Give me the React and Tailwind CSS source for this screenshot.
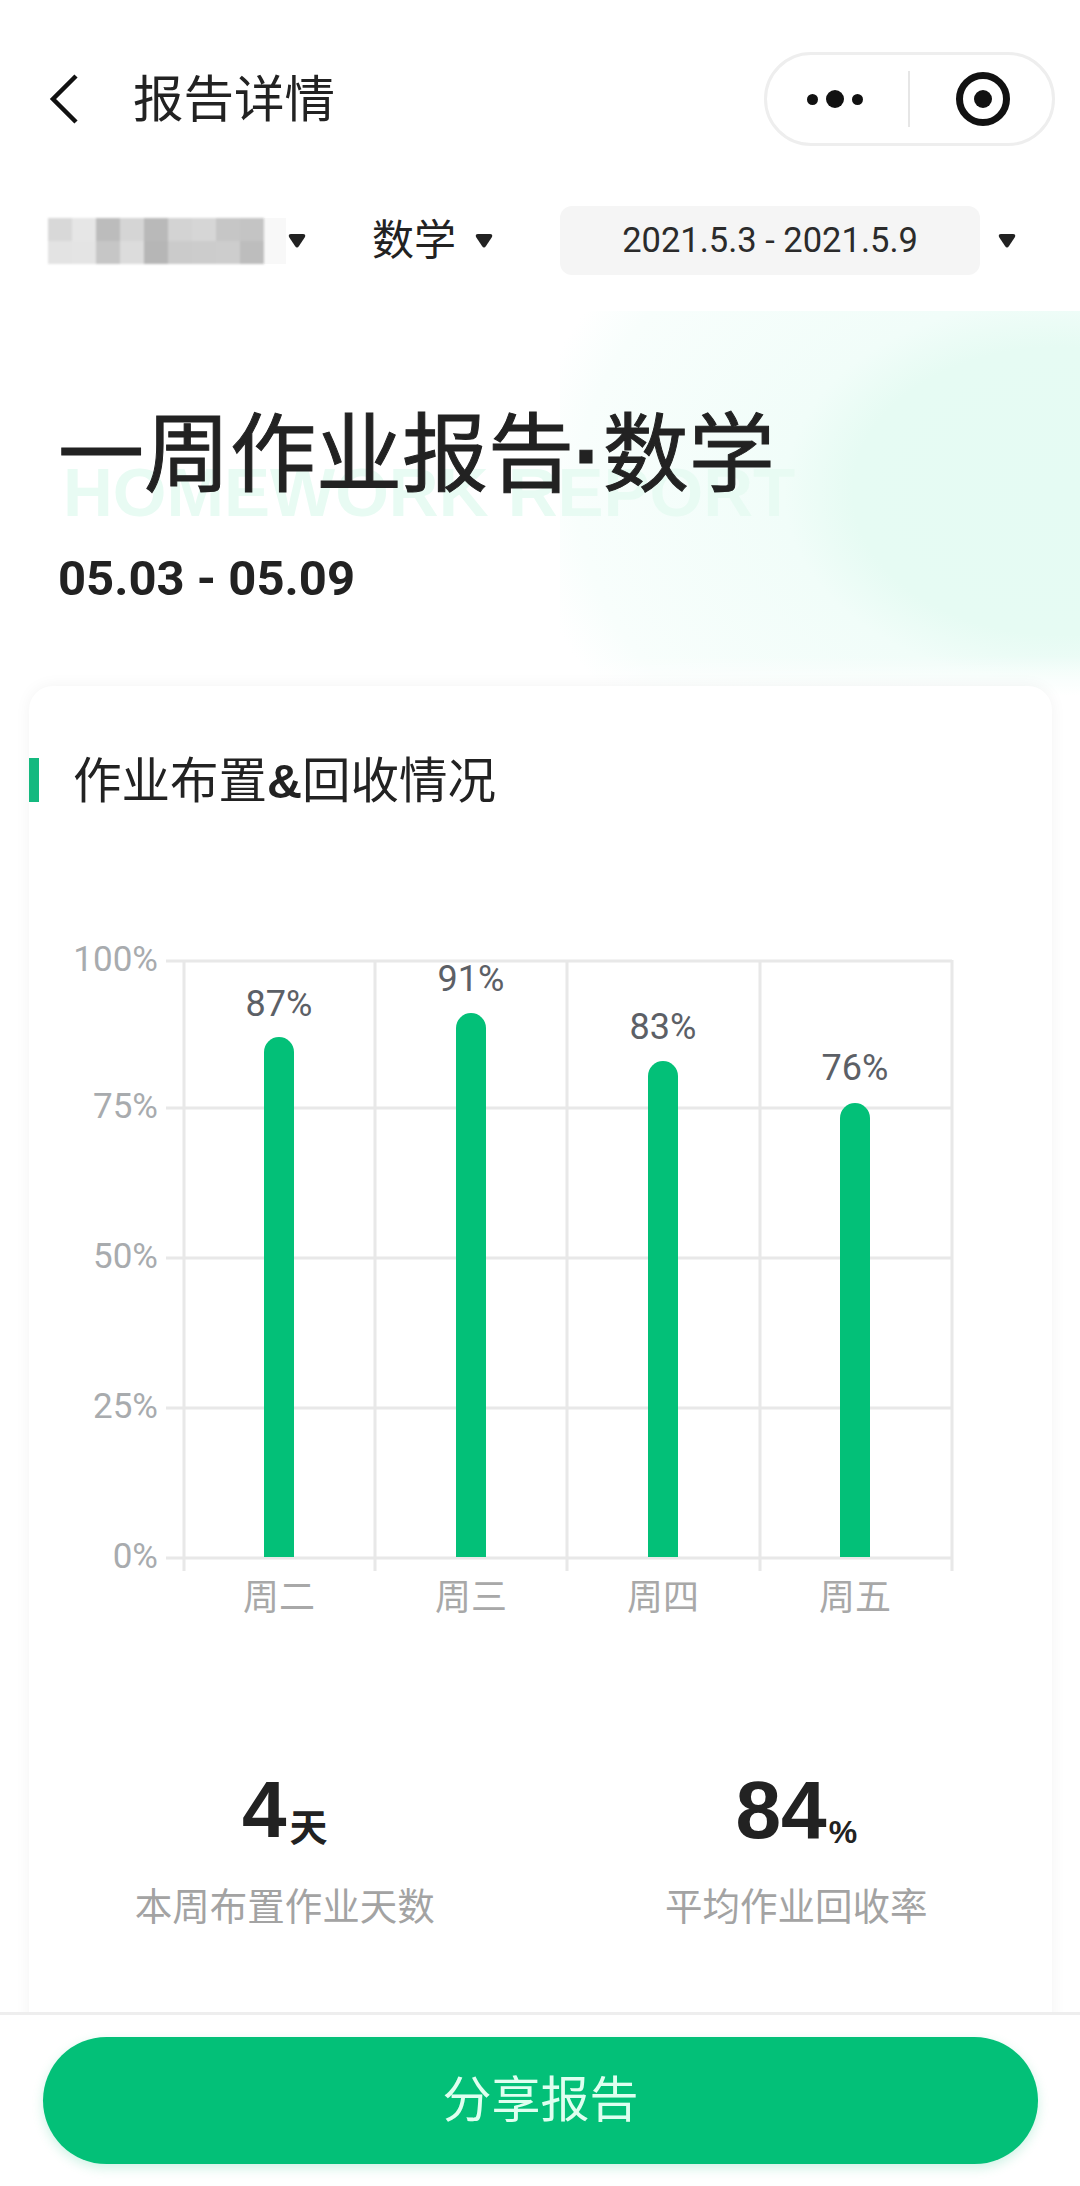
import React from "react";

const CJK = '"Liberation Sans", "Noto Sans CJK SC", sans-serif';
const CHART_FONT = 'Roboto, "Noto Sans CJK SC", sans-serif';

const bars = [
  { day: "周二", value: 87, top: 1037, labelY: 1016 },
  { day: "周三", value: 91, top: 1013, labelY: 991 },
  { day: "周四", value: 83, top: 1061, labelY: 1039 },
  { day: "周五", value: 76, top: 1103, labelY: 1080 },
];

const yTicks = [
  { label: "100%", y: 961 },
  { label: "75%", y: 1108 },
  { label: "50%", y: 1258 },
  { label: "25%", y: 1408 },
  { label: "0%", y: 1558 },
];

// blurred name, two rows of grey blocks
const mosaic = [
  "#d8d8d8", "#e6e6e6", "#bcbcbc", "#d5d5d5", "#b9b9b9", "#d3d3d3", "#d6d6d6", "#c6c6c6", "#c4c4c4",
  "#e3e3e3", "#e4e4e4", "#c6c6c6", "#dcdcdc", "#b6b6b6", "#cbcbcb", "#cccccc", "#cdcdcd", "#bdbdbd",
];

const Caret = ({ className = "" }) => (
  <svg width="18" height="16" viewBox="0 0 18 16" className={className}>
    <path d="M1 4 Q0 1 3 1 H15 Q18 1 17 4 L11 13 Q9 16 7 13 Z" fill="#222" />
  </svg>
);

const Chart = () => (
  <svg width="1023" height="700" viewBox="29 930 1023 700" className="block" style={{ fontFamily: CHART_FONT }}>
    {yTicks.map((t) => (
      <g key={t.label}>
        <line x1="166" x2="952" y1={t.y} y2={t.y} stroke="#e8e8e8" strokeWidth="3" />
        <text x="158" y={t.y + 10} textAnchor="end" fontSize="35" fill="#a8abae">{t.label}</text>
      </g>
    ))}
    {[184, 375, 567, 760, 952].map((x) => (
      <line key={x} x1={x} x2={x} y1="960" y2="1571" stroke="#e8e8e8" strokeWidth="3" />
    ))}
    {bars.map((b, i) => {
      const cx = 279 + i * 192;
      return (
        <g key={b.day}>
          <path d={`M${cx - 15} 1557 V${b.top + 15} a15 15 0 0 1 30 0 V1557 Z`} fill="#03c078" />
          <text x={cx} y={b.labelY} textAnchor="middle" fontSize="36" fill="#5c6066">{b.value}%</text>
          <text x={cx} y="1610" textAnchor="middle" fontSize="36" fill="#a8a8a8">{b.day}</text>
        </g>
      );
    })}
  </svg>
);

export default function App() {
  return (
    <div
      className="relative w-[1080px] h-[2186px] overflow-hidden bg-white flex flex-col text-[#222]"
      style={{ fontFamily: CJK }}
    >
      {/* nav bar */}
      <div className="flex items-center justify-between h-[94px] mt-[52px] pl-[48px] pr-[25px]">
        <div className="flex items-center">
          <svg width="34" height="52" viewBox="0 0 34 52" fill="none">
            <path d="M28 3 L5 26 L28 49" stroke="#111" strokeWidth="4.5" />
          </svg>
          <span className="ml-[51px] mt-[3px] text-[50.5px] leading-none">报告详情</span>
        </div>
        <div className="flex items-center w-[291px] h-[94px] rounded-full border-[3px] border-[#eeeeee]">
          <div className="flex items-center justify-center gap-[8px] w-[141px] pr-[6px]">
            <span className="w-[11px] h-[11px] rounded-full bg-[#111]" />
            <span className="w-[18px] h-[18px] rounded-full bg-[#111]" />
            <span className="w-[11px] h-[11px] rounded-full bg-[#111]" />
          </div>
          <div className="w-[2px] h-[56px] bg-[#e6e6e6]" />
          <div className="flex-1 flex items-center justify-center pl-[3px]">
            <div className="flex items-center justify-center w-[54px] h-[54px] rounded-full border-[7px] border-[#111]">
              <span className="w-[18px] h-[18px] rounded-full bg-[#111]" />
            </div>
          </div>
        </div>
      </div>

      {/* filters */}
      <div className="flex items-center h-[69px] mt-[60px] pl-[48px]">
        <div className="grid grid-cols-9 w-[216px] h-[46px] blur-[1px]">
          {mosaic.map((c, i) => (
            <div key={i} style={{ backgroundColor: c }} />
          ))}
        </div>
        <div className="w-[22px] h-[46px] bg-[#f8f8f8]" />
        <Caret className="ml-[2px]" />
        <span className="ml-[66px] text-[42px] leading-none">数学</span>
        <Caret className="ml-[19px]" />
        <div
          className="flex items-center justify-center ml-[67px] w-[420px] h-[69px] rounded-[12px] bg-[#f5f5f5] text-[34.5px] text-[#2b2b2b]"
          style={{ fontFamily: "Roboto, sans-serif" }}
        >
          2021.5.3 - 2021.5.9
        </div>
        <Caret className="ml-[18px]" />
      </div>

      {/* hero + card */}
      <div className="relative flex-1 mt-[36px] overflow-hidden">
        <div className="absolute left-[560px] top-0 w-[520px] h-[385px] bg-[radial-gradient(ellipse_230px_160px_at_500px_180px,#e5fbf3_0%,#e6fbf3_90%,#f1fdf9_120%,#f8fefc_210%,#ffffff_235%)]" />
        <div className="absolute left-[560px] top-[345px] w-[520px] h-[40px] bg-gradient-to-b from-transparent to-white" />

        <div className="relative h-[375px]">
          <span className="absolute left-[63px] top-[147px] text-[69px] leading-none font-bold text-[#e8fbf3] whitespace-nowrap">
            HOMEWORK REPORT
          </span>
          <h1 className="absolute left-[58px] top-[90px] text-[86px] leading-[108px] font-normal whitespace-nowrap [-webkit-text-stroke:1px_#222]">
            一周作业报告<span className="font-bold">·</span>数学
          </h1>
          <p
            className="absolute left-[58px] top-[243px] text-[49px] leading-none font-bold"
            style={{ fontFamily: "Roboto, sans-serif" }}
          >
            05.03 - 05.09
          </p>
        </div>

        <div className="relative ml-[29px] w-[1023px] h-[1400px] rounded-t-[24px] bg-white shadow-[0_0_16px_rgba(0,0,0,0.05)]">
          <div className="flex items-center pt-[72px] h-[116px]">
            <div className="w-[10px] h-[44px] bg-[#15b97f]" />
            <h2 className="ml-[34px] mt-[3px] text-[48.5px] leading-none font-normal whitespace-nowrap">
              作业布置<span className="font-bold">&amp;</span>回收情况
            </h2>
          </div>
          <div className="mt-[128px]">
            <Chart />
          </div>
          <div className="grid grid-cols-2 mt-[140px]">
            <div className="flex flex-col items-center">
              <div className="flex items-baseline font-bold">
                <span className="text-[80px] leading-none">4</span>
                <span className="ml-[3px] text-[38px] leading-none translate-y-[4px]">天</span>
              </div>
              <span className="mt-[39px] text-[37.5px] leading-none text-[#a3a3a3]">本周布置作业天数</span>
            </div>
            <div className="flex flex-col items-center">
              <div className="flex items-baseline font-bold">
                <span className="text-[82px] leading-[80px]">84</span>
                <span className="ml-[2px] text-[32px] leading-none translate-y-[5px]">%</span>
              </div>
              <span className="mt-[39px] text-[37.5px] leading-none text-[#a3a3a3]">平均作业回收率</span>
            </div>
          </div>
        </div>
      </div>

      {/* share button */}
      <div className="relative h-[174px] bg-white border-t-[3px] border-[#eeeeee] pt-[22px] px-[43px]">
        <button className="w-[995px] h-[127px] rounded-full bg-[#03c078] text-[49px] text-[#dffff0] shadow-[0_4px_12px_rgba(3,192,120,0.2)]">
          分享报告
        </button>
      </div>
    </div>
  );
}
